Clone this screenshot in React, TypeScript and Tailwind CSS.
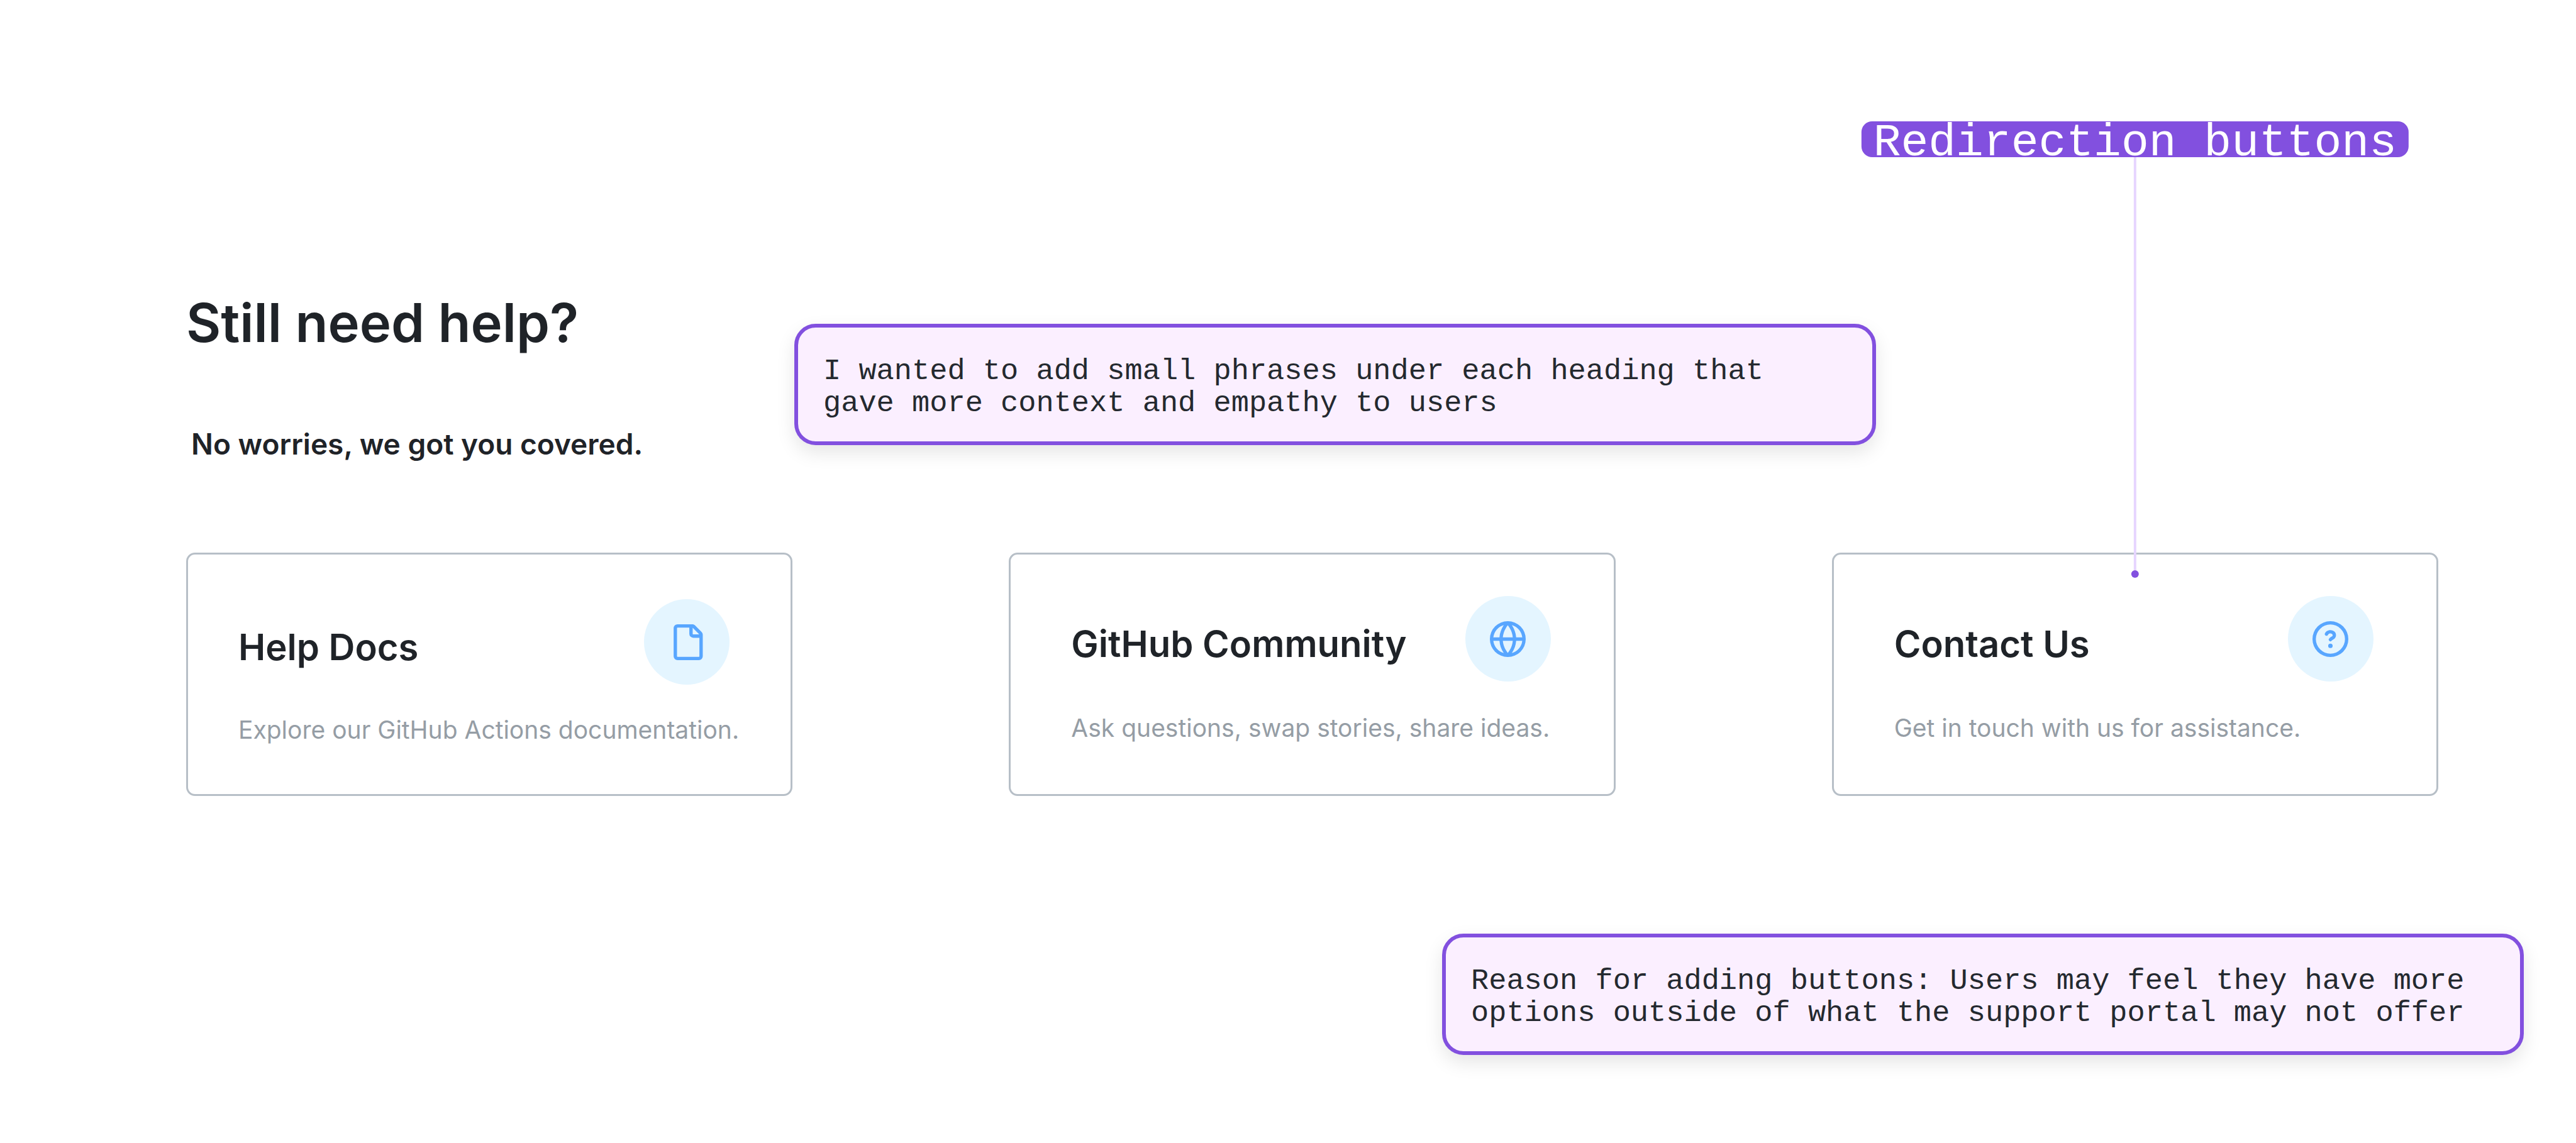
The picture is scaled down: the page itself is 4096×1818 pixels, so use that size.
import type { ReactNode } from "react";

const filePath =
  "M2 1.75C2 .784 2.784 0 3.75 0h6.586c.464 0 .909.184 1.237.513l2.914 2.914c.329.328.513.773.513 1.237v9.586A1.75 1.75 0 0 1 13.25 16h-9.5A1.75 1.75 0 0 1 2 14.25Zm1.75-.25a.25.25 0 0 0-.25.25v12.5c0 .138.112.25.25.25h9.5a.25.25 0 0 0 .25-.25V6h-2.75A1.75 1.75 0 0 1 9 4.25V1.5Zm6.75.062V4.25c0 .138.112.25.25.25h2.688l-.011-.013-2.914-2.914-.013-.011Z";
const globePath =
  "M8 0a8 8 0 1 1 0 16A8 8 0 0 1 8 0ZM5.78 8.75a9.64 9.64 0 0 0 1.363 4.177c.255.426.542.832.857 1.215.245-.296.551-.705.857-1.215A9.64 9.64 0 0 0 10.22 8.75Zm4.44-1.5a9.64 9.64 0 0 0-1.363-4.177c-.307-.51-.612-.919-.857-1.215a9.927 9.927 0 0 0-.857 1.215A9.64 9.64 0 0 0 5.78 7.25Zm-5.944 1.5H1.543a6.507 6.507 0 0 0 4.666 5.5c-.123-.181-.24-.365-.352-.552-.715-1.192-1.437-2.874-1.581-4.948Zm-2.733-1.5h2.733c.144-2.074.866-3.756 1.58-4.948.12-.197.237-.381.353-.552a6.507 6.507 0 0 0-4.666 5.5Zm10.181 1.5c-.144 2.074-.866 3.756-1.58 4.948-.12.197-.237.381-.353.552a6.507 6.507 0 0 0 4.666-5.5Zm2.733-1.5a6.507 6.507 0 0 0-4.666-5.5c.123.181.24.365.353.552.714 1.192 1.436 2.874 1.58 4.948Z";
const questionPath =
  "M0 8a8 8 0 1 1 16 0A8 8 0 0 1 0 8Zm8-6.5a6.5 6.5 0 1 0 0 13 6.5 6.5 0 0 0 0-13ZM6.92 6.085h.001a.749.749 0 1 1-1.342-.67c.169-.339.436-.701.849-.977C6.845 4.16 7.369 4 8 4a2.756 2.756 0 0 1 1.637.525c.503.377.863.965.863 1.725 0 .448-.115.83-.329 1.15-.205.307-.47.513-.692.662-.109.072-.22.138-.313.195l-.006.004a6.24 6.24 0 0 0-.26.16.952.952 0 0 0-.276.245.75.75 0 0 1-1.248-.832c.184-.264.42-.489.692-.661.103-.067.207-.132.313-.195l.007-.004c.1-.061.182-.11.258-.161a.969.969 0 0 0 .277-.245C8.96 6.514 9 6.427 9 6.25a.612.612 0 0 0-.262-.525A1.27 1.27 0 0 0 8 5.5c-.369 0-.595.09-.74.187a1.01 1.01 0 0 0-.34.398ZM9 11a1 1 0 1 1-2 0 1 1 0 0 1 2 0Z";

const cards = [
  {
    title: "Help Docs",
    text: "Explore our GitHub Actions documentation.",
    icon: filePath,
    pad: "pl-[80px] pr-[97px] pt-[71px]",
    gap: "mt-[44px]",
  },
  {
    title: "GitHub Community",
    text: "Ask questions, swap stories, share ideas.",
    icon: globePath,
    pad: "pl-[96px] pr-[100px] pt-[66px]",
    gap: "mt-[46px]",
  },
  {
    title: "Contact Us",
    text: "Get in touch with us for assistance.",
    icon: questionPath,
    pad: "pl-[96px] pr-[100px] pt-[66px]",
    gap: "mt-[46px]",
  },
];

function Note({ children }: { children: ReactNode }) {
  return (
    <aside className="min-h-[193px] w-[1720px] rounded-[34px] border-6 border-[#8250df] bg-[#fbefff] px-[40px] pt-[44px] font-['Liberation_Mono',monospace] text-[47px] leading-[51px] text-[#24292f] shadow-[0_12px_30px_rgba(0,0,0,0.1)]">
      {children}
    </aside>
  );
}

function Callout() {
  return (
    <div className="absolute bottom-full left-1/2 -mb-10 flex -translate-x-1/2 flex-col items-center">
      <div className="h-[57px] rounded-[17px] bg-[#8250df] px-[19px] font-['Liberation_Mono',monospace] text-[73px] leading-[69px] whitespace-nowrap text-white">
        Redirection buttons
      </div>
      <div className="h-[657px] w-1 bg-[#e6d5ff]" />
      <div className="size-3 rounded-full bg-[#8250df]" />
    </div>
  );
}

export default function App() {
  return (
    <main className="min-h-screen bg-white pt-[458px] pr-[219px] pl-[296px] font-[Inter,sans-serif] text-[#1f2328]">
      <header className="flex items-start">
        <div className="w-[967px] shrink-0">
          <h1 className="text-[85px] leading-[112px] font-semibold">Still need help?</h1>
          <p className="mt-[108px] pl-2 text-[46px] leading-[56px] font-semibold">No worries, we got you covered.</p>
        </div>
        <div className="mt-[57px]">
          <Note>
            I wanted to add small phrases under each heading that
            <br />
            gave more context and empathy to users
          </Note>
        </div>
      </header>

      <section className="mt-[145px] grid grid-cols-3 gap-[344px]">
        {cards.map(({ title, text, icon, pad, gap }, i) => (
          <div key={title} className="relative">
            <a
              href="#"
              className={`block min-h-[387px] rounded-[14px] border-3 border-[#b7bfc7] ${pad}`}
            >
              <div className="flex items-center justify-between">
                <h2 className="pt-4 text-[58px] leading-[72px] font-semibold whitespace-nowrap">{title}</h2>
                <span className="flex size-[136px] shrink-0 items-center justify-center rounded-full bg-[#e4f5ff] text-[#58a6ff]">
                  <svg viewBox="0 0 16 16" fill="currentColor" className="size-[57px]" aria-hidden="true">
                    <path d={icon} />
                  </svg>
                </span>
              </div>
              <p className={`text-[39px] leading-[56px] whitespace-nowrap text-[#959da5] ${gap}`}>{text}</p>
            </a>
            {i === 2 && <Callout />}
          </div>
        ))}
      </section>

      <footer className="mt-[219px] -mr-[136px] flex justify-end">
        <Note>
          Reason for adding buttons: Users may feel they have more
          <br />
          options outside of what the support portal may not offer
        </Note>
      </footer>
    </main>
  );
}
